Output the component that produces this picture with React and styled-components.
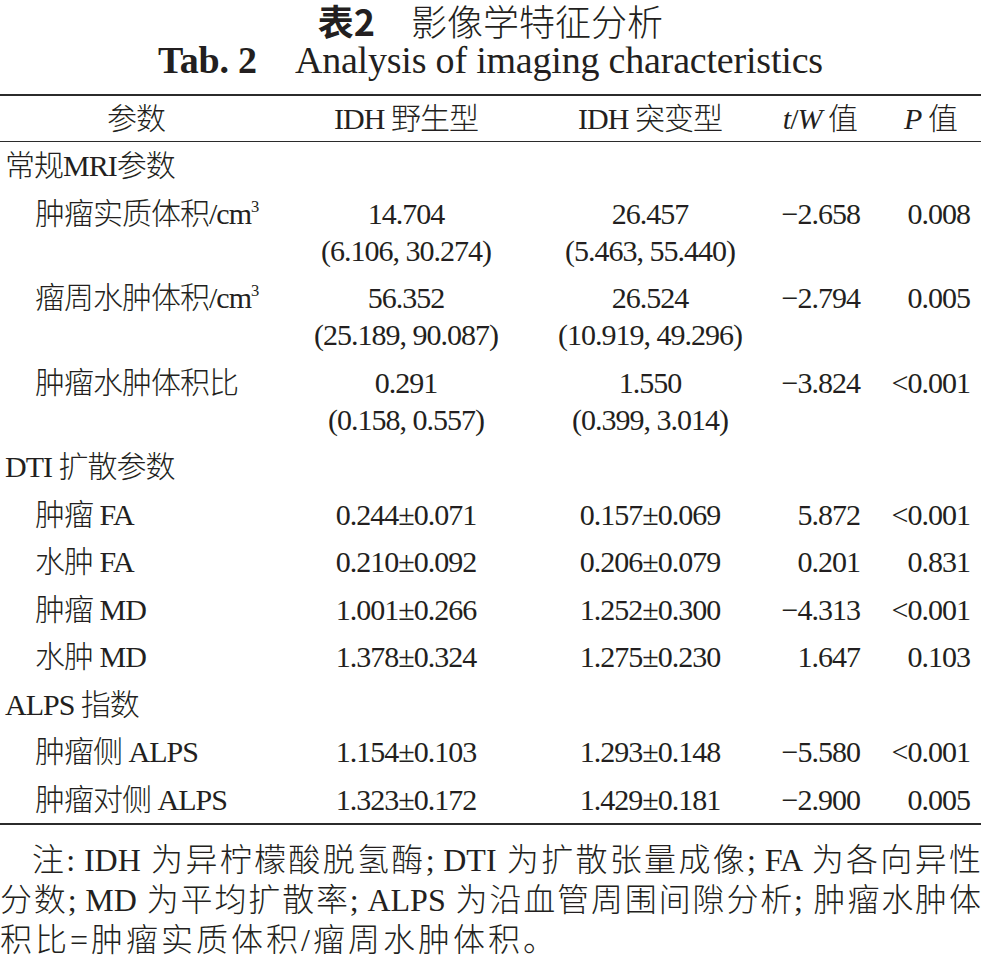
import React from 'react'
import styled, { createGlobalStyle } from 'styled-components'

const GlobalStyle = createGlobalStyle`
  html, body {
    margin: 0;
    padding: 0;
    background: #ffffff;
  }
  body {
    color: #231f20;
    font-family: "Liberation Serif", "Noto Sans CJK SC", serif;
  }
`

const Page = styled.div`
  width: 981px;
  height: 959px;
  overflow: hidden;
`

const TitleCn = styled.div`
  font-family: "Noto Sans CJK SC", sans-serif;
  font-size: 36px;
  line-height: 40px;
  font-weight: 300;
  text-align: center;

  b {
    font-weight: 700;
    margin-right: 1em;
  }
`

const TitleEn = styled.div`
  font-size: 38px;
  line-height: 40px;
  text-align: center;
  margin-bottom: 14px;
  letter-spacing: -0.2px;

  b {
    font-weight: 700;
    margin-right: 1em;
  }
`

const Table = styled.table`
  width: 981px;
  table-layout: fixed;
  border-collapse: separate;
  border-spacing: 0;
  border-top: 2px solid #2b2b2b;
  border-bottom: 2px solid #2b2b2b;
  font-size: 30px;
  font-weight: 300;
  letter-spacing: -1px;
`

const HeadCell = styled.th`
  height: 45px;
  padding: 0 ${props => props.$padRight || 0}px 0 0;
  border-bottom: 1px solid #2b2b2b;
  font-weight: 300;
  line-height: 45px;
  text-align: ${props => props.$align || 'center'};
  white-space: nowrap;

  i {
    font-style: italic;
  }
`

const LabelCell = styled.td`
  padding: 5px 0 5.5px ${props => (props.$child ? 35 : 5)}px;
  line-height: 37px;
  vertical-align: top;
  white-space: nowrap;

  sup {
    font-size: 0.55em;
    line-height: 0;
    vertical-align: 0.75em;
  }
`

const ValueCell = styled.td`
  padding: 5px ${props => props.$padRight || 0}px 5.5px 0;
  line-height: 37px;
  vertical-align: top;
  text-align: ${props => props.$align || 'center'};
  white-space: nowrap;
`

const Note = styled.div`
  margin-top: 15px;
  font-size: 32px;
  line-height: 40px;
  font-weight: 300;
`

const NoteLine = styled.div`
  text-align: ${props => (props.$last ? 'left' : 'justify')};
  text-align-last: ${props => (props.$last ? 'left' : 'justify')};
  text-indent: ${props => (props.$indent ? '1em' : '0')};
  letter-spacing: ${props => (props.$last ? '3px' : '0')};
  white-space: nowrap;
`

const Punct = styled.span`
  display: inline-block;
  width: 0.55em;
  text-align: center;
  text-indent: 0;
`

const rows = [
  { label: '常规MRI参数', group: true },
  { label: <>肿瘤实质体积/cm<sup>3</sup></>, wild: ['14.704', '(6.106, 30.274)'], mut: ['26.457', '(5.463, 55.440)'], t: '−2.658', p: '0.008' },
  { label: <>瘤周水肿体积/cm<sup>3</sup></>, wild: ['56.352', '(25.189, 90.087)'], mut: ['26.524', '(10.919, 49.296)'], t: '−2.794', p: '0.005' },
  { label: '肿瘤水肿体积比', wild: ['0.291', '(0.158, 0.557)'], mut: ['1.550', '(0.399, 3.014)'], t: '−3.824', p: '<0.001' },
  { label: 'DTI 扩散参数', group: true },
  { label: '肿瘤 FA', wild: ['0.244±0.071'], mut: ['0.157±0.069'], t: '5.872', p: '<0.001' },
  { label: '水肿 FA', wild: ['0.210±0.092'], mut: ['0.206±0.079'], t: '0.201', p: '0.831' },
  { label: '肿瘤 MD', wild: ['1.001±0.266'], mut: ['1.252±0.300'], t: '−4.313', p: '<0.001' },
  { label: '水肿 MD', wild: ['1.378±0.324'], mut: ['1.275±0.230'], t: '1.647', p: '0.103' },
  { label: 'ALPS 指数', group: true },
  { label: '肿瘤侧 ALPS', wild: ['1.154±0.103'], mut: ['1.293±0.148'], t: '−5.580', p: '<0.001' },
  { label: '肿瘤对侧 ALPS', wild: ['1.323±0.172'], mut: ['1.429±0.181'], t: '−2.900', p: '0.005' },
]

const Lines = ({ items }) => items.map((item, i) => (
  <React.Fragment key={i}>
    {i > 0 && <br />}
    {item}
  </React.Fragment>
))

const App = () => (
  <Page>
    <GlobalStyle />
    <TitleCn><b>表2</b>影像学特征分析</TitleCn>
    <TitleEn><b>Tab. 2</b>Analysis of imaging characteristics</TitleEn>

    <Table>
      <colgroup>
        <col style={{ width: 272 }} />
        <col style={{ width: 268 }} />
        <col style={{ width: 220 }} />
        <col style={{ width: 120 }} />
        <col style={{ width: 101 }} />
      </colgroup>
      <thead>
        <tr>
          <HeadCell>参数</HeadCell>
          <HeadCell>IDH 野生型</HeadCell>
          <HeadCell>IDH 突变型</HeadCell>
          <HeadCell $align="right" $padRight={23}><i>t</i>/<i>W</i> 值</HeadCell>
          <HeadCell><i>P</i> 值</HeadCell>
        </tr>
      </thead>
      <tbody>
        {rows.map((row, i) => row.group ? (
          <tr key={i}>
            <LabelCell colSpan={5}>{row.label}</LabelCell>
          </tr>
        ) : (
          <tr key={i}>
            <LabelCell $child>{row.label}</LabelCell>
            <ValueCell><Lines items={row.wild} /></ValueCell>
            <ValueCell><Lines items={row.mut} /></ValueCell>
            <ValueCell $align="right" $padRight={20}>{row.t}</ValueCell>
            <ValueCell $align="right" $padRight={11}>{row.p}</ValueCell>
          </tr>
        ))}
      </tbody>
    </Table>

    <Note>
      <NoteLine $indent>
        注<Punct>:</Punct>IDH 为异柠檬酸脱氢酶<Punct>;</Punct>DTI 为扩散张量成像<Punct>;</Punct>FA 为各向异性
      </NoteLine>
      <NoteLine>
        分数<Punct>;</Punct>MD 为平均扩散率<Punct>;</Punct>ALPS 为沿血管周围间隙分析<Punct>;</Punct>肿瘤水肿体
      </NoteLine>
      <NoteLine $last>积比=肿瘤实质体积/瘤周水肿体积。</NoteLine>
    </Note>
  </Page>
)

export default App
